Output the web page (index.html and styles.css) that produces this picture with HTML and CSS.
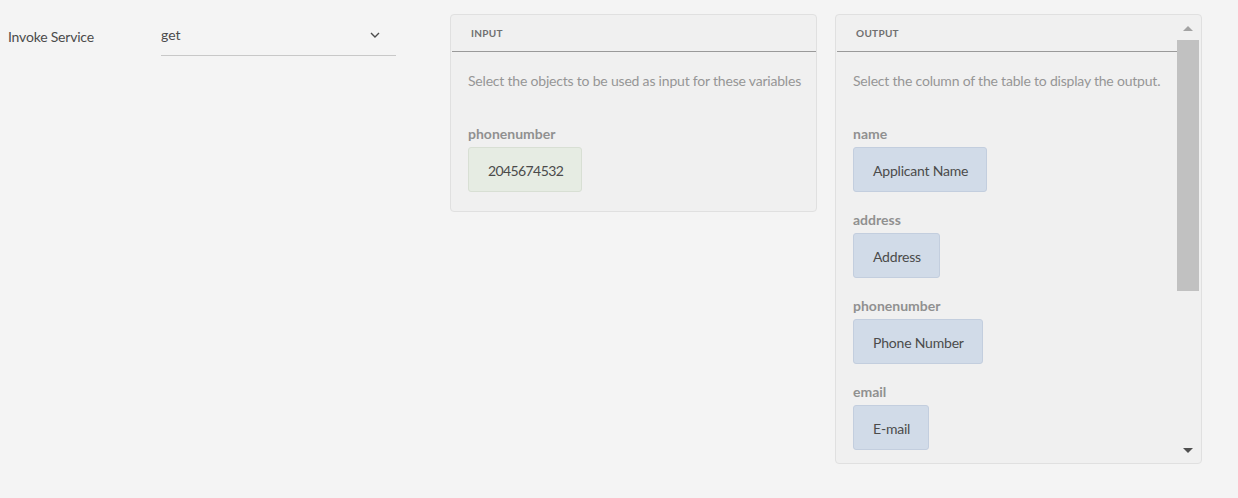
FILE: index.html
```html
<!DOCTYPE html>
<html>
<head>
<meta charset="utf-8">
<link rel="stylesheet" href="styles.css">
</head>
<body>
<div class="page">
  <div class="field-label">Invoke Service</div>
  <div class="select">
    <span class="select-value">get</span>
    <svg class="chevron" width="12" height="8" viewBox="0 0 12 8"><path d="M2 2 L6 6 L10 2" fill="none" stroke="#4b4b4b" stroke-width="1.4"/></svg>
  </div>
  <div class="panel panel-input">
    <div class="panel-main">
      <div class="panel-header">INPUT</div>
      <div class="panel-body">
        <p class="desc">Select the objects to be used as input for these variables</p>
        <div class="item">
          <div class="item-label">phonenumber</div>
          <div class="chip chip-green">2045674532</div>
        </div>
      </div>
    </div>
  </div>
  <div class="panel panel-output">
    <div class="panel-main">
      <div class="panel-header">OUTPUT</div>
      <div class="panel-body">
        <p class="desc">Select the column of the table to display the output.</p>
        <div class="item">
          <div class="item-label">name</div>
          <div class="chip chip-blue">Applicant Name</div>
        </div>
        <div class="item">
          <div class="item-label">address</div>
          <div class="chip chip-blue">Address</div>
        </div>
        <div class="item">
          <div class="item-label">phonenumber</div>
          <div class="chip chip-blue">Phone Number</div>
        </div>
        <div class="item">
          <div class="item-label">email</div>
          <div class="chip chip-blue">E-mail</div>
        </div>
      </div>
    </div>
    <div class="scrollbar">
      <div class="sb-btn"><span class="tri-up"></span></div>
      <div class="sb-track"><div class="sb-thumb"></div></div>
      <div class="sb-btn sb-btn-down"><span class="tri-down"></span></div>
    </div>
  </div>
</div>
</body>
</html>
```
FILE: styles.css
```css
html, body {
  margin: 0;
  padding: 0;
  background: #f4f4f4;
  font-family: "Lato", "Open Sans", sans-serif;
  color: #4b4b4b;
}
.page {
  display: flex;
  align-items: flex-start;
  padding: 14px 0 0 8px;
}
.field-label {
  width: 153px;
  font-size: 14px;
  line-height: 20px;
  margin-top: 13px;
  letter-spacing: -0.2px;
}
.select {
  width: 235px;
  height: 42px;
  border-bottom: 1px solid #c8c8c8;
  display: flex;
  align-items: center;
  justify-content: space-between;
  box-sizing: border-box;
}
.select-value {
  font-size: 14px;
  line-height: 20px;
}
.chevron {
  margin-right: 15px;
}
.panel {
  width: 367px;
  box-sizing: border-box;
  border: 1px solid #e0e0e0;
  border-radius: 4px;
  background: #f0f0f0;
  display: flex;
}
.panel-input {
  margin-left: 54px;
}
.panel-output {
  margin-left: 18px;
  height: 450px;
}
.panel-main {
  flex: 1;
  min-width: 0;
  overflow: hidden;
}
.panel-header {
  height: 36px;
  border-bottom: 1px solid #9a9a9a;
  font-size: 10px;
  font-weight: 700;
  letter-spacing: 0.3px;
  color: #6f6f6f;
  line-height: 36px;
  padding-left: 19px;
  margin-left: 1px;
}
.panel-body {
  padding: 19px 17px 19px 17px;
}
.desc {
  margin: 0 0 33px 0;
  font-size: 14px;
  line-height: 20px;
  color: #969696;
  white-space: nowrap;
  letter-spacing: -0.2px;
}
.item {
  margin-bottom: 18px;
}
.item:last-child {
  margin-bottom: 0;
}
.item-label {
  font-size: 14px;
  font-weight: 700;
  line-height: 20px;
  color: #909090;
  margin-bottom: 3px;
}
.chip {
  display: inline-block;
  height: 45px;
  box-sizing: border-box;
  padding: 0 18px 0 19px;
  line-height: 45px;
  font-size: 14px;
  border-radius: 3px;
  color: #4b4b4b;
  letter-spacing: -0.2px;
}
.chip-green {
  background: #e6ece3;
  border: 1px solid #d8dfd4;
  letter-spacing: -0.6px;
}
.chip-blue {
  background: #d1dbe8;
  border: 1px solid #c3cede;
}
.scrollbar {
  width: 22px;
  margin-right: 2px;
  display: flex;
  flex-direction: column;
}
.sb-btn {
  height: 25px;
  display: flex;
  align-items: center;
  justify-content: center;
}
.tri-up {
  width: 0;
  height: 0;
  border-left: 5px solid transparent;
  border-right: 5px solid transparent;
  border-bottom: 5px solid #a3a3a3;
  margin-top: 2px;
}
.tri-down {
  width: 0;
  height: 0;
  border-left: 5px solid transparent;
  border-right: 5px solid transparent;
  border-top: 5px solid #505050;
}
.sb-track {
  flex: 1;
}
.sb-thumb {
  height: 251px;
  background: #c1c1c1;
}
```
